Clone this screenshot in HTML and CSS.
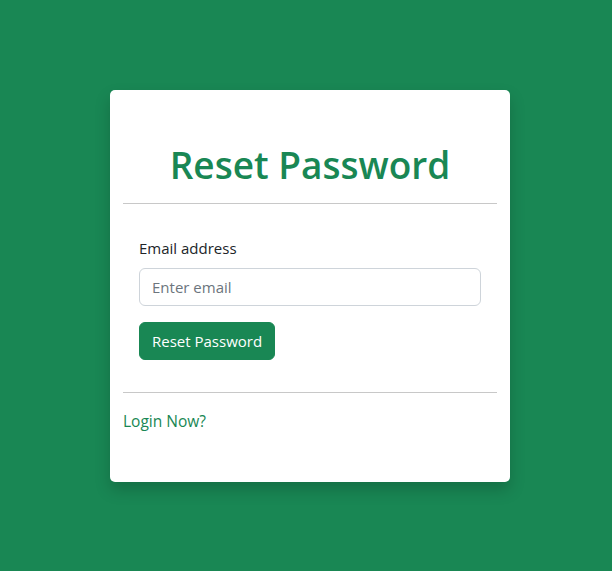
FILE: index.html
```html
<!DOCTYPE html>
<html lang="en">
<head>
<meta charset="utf-8">
<title>Reset Password</title>
<link rel="stylesheet" href="styles.css">
</head>
<body>
<main class="page">
  <section class="card">
    <h1 class="title">Reset Password</h1>
    <hr class="rule">
    <form class="form">
      <label class="label" for="email">Email address</label>
      <input class="input" id="email" type="email" placeholder="Enter email">
      <button class="btn" type="button">Reset Password</button>
    </form>
    <hr class="rule">
    <a class="link" href="#">Login Now?</a>
  </section>
</main>
</body>
</html>
```

FILE: styles.css
```css
html, body {
  margin: 0;
  padding: 0;
  height: 100%;
}
body {
  background: #198754;
  font-family: "Open Sans", "Noto Sans", sans-serif;
  color: #212529;
  font-size: 15px;
}
.page {
  display: flex;
  align-items: center;
  justify-content: center;
  height: 100%;
  padding-left: 8px;
  box-sizing: border-box;
}
.card {
  width: 400px;
  box-sizing: border-box;
  background: #fff;
  border-radius: 5px;
  padding: 51px 13px 49px;
  box-shadow: 0 8px 16px rgba(0, 0, 0, 0.18);
}
.title {
  margin: 0 0 14px;
  font-size: 37px;
  line-height: 48px;
  font-weight: 600;
  text-align: center;
  color: #198754;
}
.rule {
  margin: 0;
  border: 0;
  border-top: 1px solid #c8c8c8;
}
.form {
  display: flex;
  flex-direction: column;
  align-items: flex-start;
  padding: 32px 16px;
}
.label {
  line-height: 24px;
  margin-bottom: 8px;
}
.input {
  width: 100%;
  box-sizing: border-box;
  height: 38px;
  padding: 6px 12px;
  font: inherit;
  color: #212529;
  border: 1px solid #ced4da;
  border-radius: 6px;
  margin-bottom: 16px;
}
.input::placeholder {
  color: #6c757d;
}
.btn {
  height: 38px;
  padding: 6px 12px;
  font: inherit;
  color: #fff;
  background: #198754;
  border: 1px solid #198754;
  border-radius: 6px;
}
.link {
  display: block;
  margin-top: 16px;
  line-height: 24px;
  font-size: 15.5px;
  color: #198754;
  text-decoration: none;
}
```
